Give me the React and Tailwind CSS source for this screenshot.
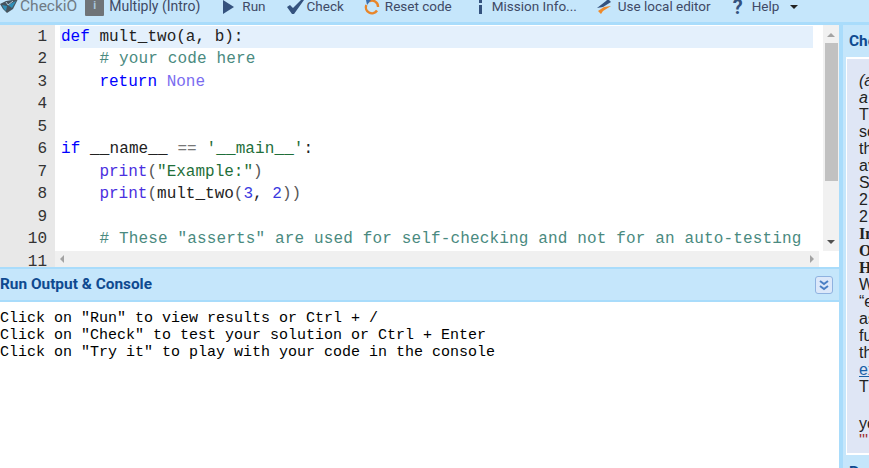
import React from "react";

const mono = "font-['Liberation_Mono',monospace]";

const Kw = ({ children }) => <span className="text-[#0000ff]">{children}</span>;
const Fn = ({ children }) => <span className="text-[#4a2fe0]">{children}</span>;
const Cm = ({ children }) => <span className="tracking-[0.15px] text-[#4a8a80]">{children}</span>;
const St = ({ children }) => <span className="text-[#1f6f3a]">{children}</span>;
const Nm = ({ children }) => <span className="text-[#7a6cf0]">{children}</span>;
const Dg = ({ children }) => <span className="text-[#3a3ae0]">{children}</span>;
const Pn = ({ children }) => <span className="text-[#555]">{children}</span>;

const codeLines = [
  <><Kw>def</Kw> mult_two(a, b):</>,
  <>    <Cm># your code here</Cm></>,
  <>    <Kw>return</Kw> <Nm>None</Nm></>,
  "",
  "",
  <span className="tracking-[0.1px]"><Kw>if</Kw> __name__ <span className="text-[#777]">==</span> <St>'__main__'</St>:</span>,
  <>    <Fn>print</Fn><Pn>(</Pn><St>"Example:"</St><Pn>)</Pn></>,
  <>    <Fn>print</Fn><Pn>(</Pn>mult_two<Pn>(</Pn><Dg>3</Dg>, <Dg>2</Dg><Pn>))</Pn></>,
  "",
  <>    <Cm># These "asserts" are used for self-checking and not for an auto-testing</Cm></>,
];

const sideLines = [
  { t: "(adapted", c: "italic" },
  { t: "a mission", c: "italic" },
  { t: "This is an intro" },
  { t: "solve missions" },
  { t: "the most out of" },
  { t: "available for" },
  { t: "Solve: 3 x 2" },
  { t: "2" },
  { t: "2" },
  { t: "Input", c: "font-bold font-['Liberation_Serif',serif]" },
  { t: "Output", c: "font-bold font-['Liberation_Serif',serif]" },
  { t: "How", c: "font-bold font-['Liberation_Serif',serif]" },
  { t: "When you" },
  { t: "“example”" },
  { t: "assert" },
  { t: "function" },
  { t: "the code" },
  { t: "example", c: "text-[#1a5fa8] underline" },
  { t: "This" },
  { t: "\u00a0", c: "h-[20px]" },
  { t: "you" },
  { t: "'''", c: "text-[#a03030]" },
];

function Logo() {
  return (
    <svg width="19" height="15" viewBox="0 0 19 15">
      <path d="M0 5 L6 2 L18 0 L13 10 L7 14 L3 10 Z" fill="#46545e" />
      <path d="M8 6 L16 2 L12 9 Z" fill="#2f8fb8" />
      <path d="M2 6 L7 7 L6 12 L4 10 Z" fill="#2f8fb8" />
      <path d="M6 3 L8 6 L13 2" stroke="#c5e6fb" strokeWidth="0.8" fill="none" />
    </svg>
  );
}

function InfoBox() {
  return (
    <div className="flex h-[18px] w-[19px] items-center justify-center rounded-[1px] bg-[#6f7478] text-[11px] font-bold text-[#a9c6dc]">
      i
    </div>
  );
}

function Play() {
  return (
    <svg width="11" height="14" viewBox="0 0 11 14">
      <path d="M0 0 L11 7 L0 14 Z" fill="#34527e" />
    </svg>
  );
}

function CheckMark() {
  return (
    <svg width="17" height="15" viewBox="0 0 17 15">
      <path d="M0 8 L3 6 L6 9 L15 0 L17 1 L7 15 L5 15 Z" fill="#34527e" />
    </svg>
  );
}

function ResetIcon() {
  return (
    <svg width="16" height="16" viewBox="0 0 16 16">
      <path d="M5 2.5 A6 6 0 0 1 14 8" stroke="#e8862a" strokeWidth="2.4" fill="none" />
      <path d="M13 11.5 A6 6 0 0 1 5 13.5 A6 6 0 0 1 2.3 6" stroke="#e8862a" strokeWidth="2.4" fill="none" />
      <path d="M2 1 L7 1 L3 6 Z" fill="#3a6fb0" />
    </svg>
  );
}

function ThinInfo() {
  return (
    <svg width="5" height="14" viewBox="0 0 5 14">
      <rect x="1" y="0" width="3" height="3" fill="#34527e" />
      <rect x="1" y="5" width="3" height="9" fill="#34527e" />
    </svg>
  );
}

function LocalEditor() {
  return (
    <svg width="17" height="16" viewBox="0 0 17 16">
      <path d="M1 9 L10 2 L12 0 L15 3 L7 8 Z" fill="#34527e" />
      <path d="M15 7 L7 12 L5 15 L2 12 L8 8 Z" fill="#ef8a2a" />
    </svg>
  );
}

function ToolItem({ icon, label, gap, left }) {
  return (
    <div className={`flex items-center ${left}`}>
      {icon}
      <span className={gap}>{label}</span>
    </div>
  );
}

export default function App() {
  return (
    <div className="flex h-[468px] w-[869px] flex-col overflow-hidden bg-white font-['Roboto',sans-serif]">
      {/* toolbar, scrolled a bit off the top */}
      <div className="h-[25px] shrink-0 border-b-[3px] border-[#a9dcfb] bg-[#c5e6fb]">
        <div className="flex h-[13px] items-center whitespace-nowrap text-[13.5px] text-[#3f4a66]">
          <Logo />
          <span className="ml-px text-[15.5px] text-[#6f7a84]">CheckiO</span>
          <div className="ml-2"><InfoBox /></div>
          <span className="ml-[5px] text-[14px]">Multiply (Intro)</span>
          <ToolItem left="ml-[23px]" icon={<Play />} gap="ml-2" label="Run" />
          <ToolItem left="ml-[21px]" icon={<CheckMark />} gap="ml-[3px]" label="Check" />
          <ToolItem left="ml-5" icon={<ResetIcon />} gap="ml-[5px]" label="Reset code" />
          <ToolItem left="ml-[26px]" icon={<ThinInfo />} gap="ml-[9px]" label="Mission Info..." />
          <ToolItem left="ml-[19px]" icon={<LocalEditor />} gap="ml-[5px]" label="Use local editor" />
          <span className="ml-[22px] w-[10px] text-[20px] font-bold leading-none text-[#34527e]">?</span>
          <span className="ml-[9px]">Help</span>
          <div className="ml-[11px] h-0 w-0 border-x-[4px] border-t-[4px] border-x-transparent border-t-[#222]" />
        </div>
      </div>

      <div className="flex min-h-0 flex-1">
        <div className="flex min-w-0 flex-1 flex-col">
          {/* editor */}
          <div className={`flex h-[242px] shrink-0 overflow-hidden text-[16px] leading-[22.4px] ${mono}`}>
            <div className="w-[55px] shrink-0 bg-[#e8e8e8] pr-2 text-right text-[#333]">
              <div className="h-px" />
              {Array.from({ length: 11 }, (_, i) => (
                <div key={i} className={i === 10 ? "mt-px h-[22.44px]" : "h-[22.44px]"}>{i + 1}</div>
              ))}
            </div>
            <div className="flex min-w-0 flex-1 flex-col">
              <div className="flex min-h-0 flex-1">
                <div className="relative h-[226px] min-w-0 flex-1 overflow-hidden whitespace-pre pl-[6px] pt-px text-[#222]">
                  <div className="absolute left-[5px] top-px h-[22px] w-[753px] bg-[#e4f0fc]" />
                  <div className="relative">
                    {codeLines.map((line, i) => (
                      <div key={i} className="h-[22.44px]">{line}</div>
                    ))}
                  </div>
                </div>
                <div className="flex h-[226px] w-4 shrink-0 flex-col items-center bg-[#f1f1f1] pt-2">
                  <div className="h-0 w-0 border-x-[4px] border-b-[4px] border-x-transparent border-b-[#a3a3a3]" />
                  <div className="mt-[6px] h-[138px] w-[13px] bg-[#c1c1c1]" />
                  <div className="mt-[59px] h-0 w-0 border-x-[4px] border-t-[4px] border-x-transparent border-t-[#505050]" />
                </div>
              </div>
              <div className="flex h-4 w-[764px] items-center justify-between bg-[#f0f0f0] px-[5px]">
                <div className="h-0 w-0 border-y-[4px] border-r-[4px] border-y-transparent border-r-[#a3a3a3]" />
                <div className="h-0 w-0 border-y-[4px] border-l-[4px] border-y-transparent border-l-[#a3a3a3]" />
              </div>
            </div>
          </div>

          {/* output */}
          <div className="flex h-[35px] shrink-0 items-center justify-between border-y-2 border-[#a9dcfb] bg-[#c5e6fb] pr-[6px]">
            <span className="pt-px text-[15.4px] font-bold text-[#0f4a90]">Run Output &amp; Console</span>
            <div className="flex h-[18px] w-[18px] items-center justify-center rounded-[3px] border border-[#8fb2e0] bg-[#dce8fa]">
              <svg width="12" height="12" viewBox="0 0 12 12">
                <path d="M2 2 L6 5 L10 2 M2 7 L6 10 L10 7" stroke="#4a7fc4" strokeWidth="2" fill="none" />
              </svg>
            </div>
          </div>
          <div className={`whitespace-pre pt-2 text-[15px] leading-[17px] text-black ${mono}`}>
            <div>Click on "Run" to view results or Ctrl + /</div>
            <div>Click on "Check" to test your solution or Ctrl + Enter</div>
            <div>Click on "Try it" to play with your code in the console</div>
          </div>
        </div>

        {/* right panel, cut by the window edge */}
        <div className="w-[30px] shrink-0 border-l-[4px] border-[#a9dcfb] bg-[#c5e6fb] text-[16px]">
          <div className="flex h-[32px] items-center whitespace-nowrap pl-[6px] pt-px text-[15.4px] font-bold text-[#0f4a90]">
            Check
          </div>
          <div className="ml-[3px] h-[398px] overflow-hidden whitespace-nowrap border-y-2 border-l border-white bg-[#dfe6f5] pt-[13px] font-['Liberation_Sans',sans-serif] leading-[17px] text-[#222]">
            {sideLines.map((line, i) => (
              <div key={i} className={`pl-[12px] ${line.c || ""}`}>{line.t}</div>
            ))}
          </div>
          <div className="whitespace-nowrap pl-[6px] pt-[6px] text-[15.4px] font-bold text-[#0f4a90]">Run</div>
        </div>
      </div>
    </div>
  );
}
